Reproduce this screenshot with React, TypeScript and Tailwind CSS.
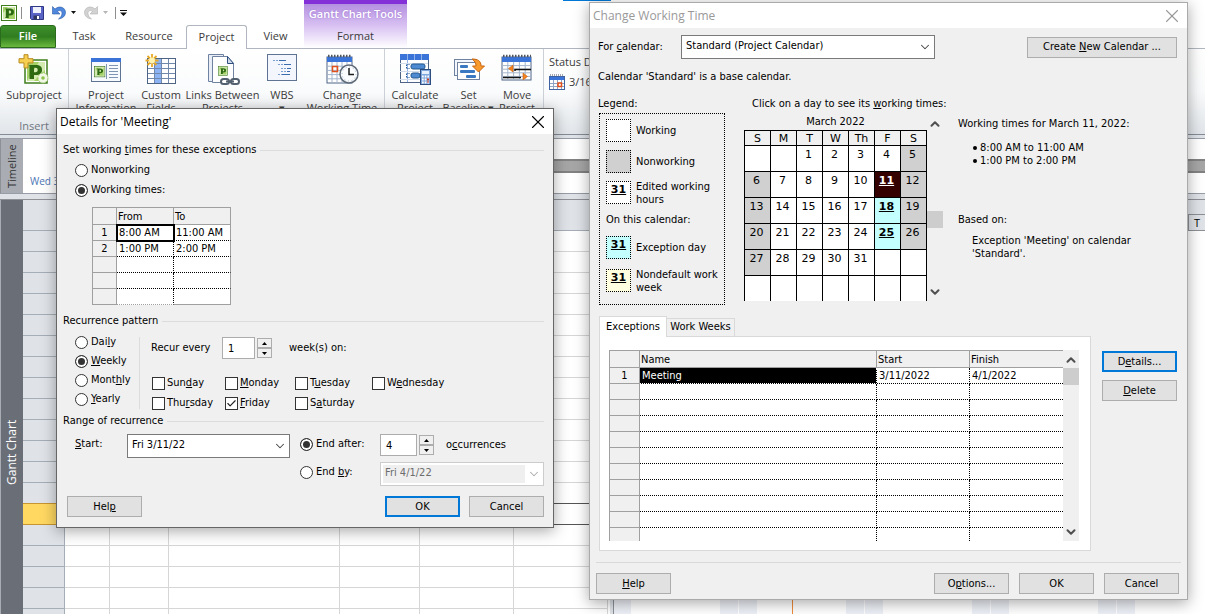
import React from "react";
import { ChevronDown, ChevronUp, Check, X } from "lucide-react";

/* Renders a caption whose access key (the letter after "&") is underlined. */
function Key({ text }: { text: string }) {
  const i = text.indexOf("&");
  if (i < 0) return <>{text}</>;
  return (
    <span className="whitespace-pre">
      {text.slice(0, i)}
      <u className="underline-offset-1">{text[i + 1]}</u>
      {text.slice(i + 2)}
    </span>
  );
}

/* ---------- icons ---------- */

function ProjectLogo({ x = 0, y = 0, s = 1 }: { x?: number; y?: number; s?: number }) {
  return (
    <g transform={`translate(${x} ${y}) scale(${s})`}>
      <rect x="0.5" y="0.5" width="15" height="15" fill="#fff" stroke="#3f7d1c" />
      <path d="M2 2h12v12H2z" fill="#a5d266" />
      <path d="M2 14V8l5-6h7L6 14z" fill="#d3ebb0" />
      <path d="M4 3.5h5.2c2.4 0 3.8 1.3 3.8 3.4 0 2.2-1.6 3.600-4.100 3.600H7.800V13H4l.8-1V4.500zm3.900 2v3h.8c.9 0 1.400-.5 1.400-1.500s-.5-1.500-1.400-1.500z" fill="#2d6a12" />
    </g>
  );
}

function CalendarGrid({ w = 28, h = 26, x = 1, y = 3 }: { w?: number; h?: number; x?: number; y?: number }) {
  const cols = [1, 2, 3, 4].map((n) => x + (w / 5) * n);
  const rows = [1, 2, 3, 4].map((n) => y + 5 + ((h - 5) / 5) * n);
  return (
    <g>
      <rect x={x} y={y} width={w} height={h} fill="#fff" stroke="#4d6485" />
      <rect x={x} y={y} width={w} height="5" fill="#3b74d8" />
      {cols.map((c) => (
        <path key={c} d={`M${c} ${y + 5}V${y + h}`} stroke="#a3b5cd" />
      ))}
      {rows.map((r) => (
        <path key={r} d={`M${x} ${r}H${x + w}`} stroke="#a3b5cd" />
      ))}
      <path d={`M${x + 1} ${y - 1}H${x + w}`} stroke="#4f5660" strokeWidth="2.500" strokeDasharray="1.500 1.500" />
    </g>
  );
}

const big = "h-8 w-8 shrink-0";

const SubprojectIcon = () => (
  <svg viewBox="0 0 32 32" className={big}>
    <rect x="7" y="6" width="22" height="23" fill="#fff" stroke="#3f7d1c" strokeWidth="1.500" />
    <path d="M9 8h18v19H9z" fill="#a5d266" />
    <path d="M9 27l12-19h6v8L16 27z" fill="#d3ebb0" />
    <path d="M11 11h7c4 0 6 1.800 6 5s-2.300 5-6 5h-2v4h-4.500V12zm5 2.800v4.400h1.500c1.500 0 2.200-.8 2.200-2.200s-.7-2.200-2.200-2.200z" fill="#2d6a12" />
    <circle cx="25" cy="24" r="5" fill="#f1f8e6" stroke="#9cc76a" strokeDasharray="2 1.500" />
    <circle cx="25" cy="24" r="1.800" fill="#8cc34a" />
    <path d="M6 .7h4v4h5v4.200h-5v5H6v-5H1V4.700h5z" fill="#f6cf52" stroke="#b98a1e" />
  </svg>
);
const InfoIcon = () => (
  <svg viewBox="0 0 32 32" className={big}>
    <rect x="1.500" y="4.500" width="29" height="23" fill="#f7faff" stroke="#5f7493" />
    <rect x="1" y="4" width="30" height="4" fill="#3b74d8" />
    <path d="M16.500 10v15" stroke="#8095b3" />
    <path d="M19 11.500h9M19 14.500h9M19 17.500h9M19 20.500h9M19 23.500h9" stroke="#8095b3" />
    <ProjectLogo x={4} y={12} s={0.7} />
  </svg>
);
const CustomIcon = () => (
  <svg viewBox="0 0 32 32" className={big}>
    <rect x="2.500" y="4.500" width="28" height="25" fill="#fff" stroke="#4d6485" />
    <rect x="9" y="5" width="7" height="24" fill="#8cb4f5" />
    <path d="M9.500 5v24M16.500 5v24M23.500 5v24M3 9.500h27M3 14.500h27M3 19.500h27M3 24.500h27" stroke="#6f88ab" />
    <path d="M7 0v13M.5 6.500h13M2.500 2l9 9M11.500 2l-9 9" stroke="#e8a923" strokeWidth="1.800" />
    <circle cx="7" cy="6.500" r="3" fill="#fff3b0" />
  </svg>
);
const LinksIcon = () => (
  <svg viewBox="0 0 34 32" className="h-8 w-[34px] shrink-0">
    <path d="M2.500.5h15v27h-15z" fill="#e9eef6" stroke="#6f83a0" />
    <path d="M6.500 2.500h15l6 7v19h-21z" fill="#fff" stroke="#6f83a0" />
    <path d="M21.500 2.500v7h6z" fill="#cfd9e8" stroke="#2f4f80" />
    <ProjectLogo x={12} y={12} s={0.62} />
    <g fill="#fff" stroke="#53606f" strokeWidth="2">
      <rect x="15" y="25" width="8" height="5" rx="2.500" />
      <rect x="25" y="25" width="8" height="5" rx="2.500" />
      <path d="M20 27.500h8" />
    </g>
  </svg>
);
const WbsIcon = () => (
  <svg viewBox="0 0 32 32" className={big}>
    <rect x="1.500" y=".5" width="29" height="26" fill="#f3f7fd" stroke="#5f7493" />
    <path d="M7 6.500h5M12 10.500h5M15 14.500h5M15 17.500h5M12 20.500h4" stroke="#7c9fd0" strokeDasharray="2 1" />
    <path d="M13 6.500h7M18 10.500h7M21 14.500h4M16 20.500h8M21 17.500h3" stroke="#3a6cae" />
  </svg>
);
const ChangeIcon = () => (
  <svg viewBox="0 0 34 32" className="h-8 w-[34px] shrink-0">
    <CalendarGrid x={2} w={25} />
    <rect x="7.500" y="12.500" width="5" height="5" fill="none" stroke="#e0501c" strokeWidth="1.500" />
    <circle cx="24" cy="20" r="9" fill="#fafcff" stroke="#5f6a78" strokeWidth="1.500" />
    <circle cx="24" cy="20" r="7" fill="none" stroke="#a7b2c0" strokeDasharray="1 2.660" />
    <path d="M24 14v6.500h5" fill="none" stroke="#1d1d1d" strokeWidth="1.500" />
  </svg>
);
const CalculateIcon = () => (
  <svg viewBox="0 0 34 32" className="h-8 w-[34px] shrink-0">
    <rect x="2.500" y=".5" width="28" height="28" fill="#fff" stroke="#4d6485" />
    <rect x="2" y="0" width="29" height="6" fill="#3b74d8" />
    <path d="M9.500 0v28M16.500 0v6M23.500 0v6" stroke="#8fb2ea" />
    <path d="M2 9.500h28M2 17.500h28M2 25.500h28" stroke="#d3dcea" />
    <rect x="13" y="10" width="14" height="5" rx="2" fill="#4d8ad2" stroke="#24588f" />
    <rect x="13" y="19" width="9" height="5" rx="2" fill="#4d8ad2" stroke="#24588f" />
    <path d="M8.500 10.500h4M8.500 14.500h4M8.500 19.500h4M8.500 23.500h4M8.500 11v3M8.500 20v3" stroke="#24588f" strokeDasharray="1 1" />
    <rect x="22.500" y="15.500" width="10" height="15" fill="#7fa6dd" stroke="#2d4d80" />
    <rect x="24" y="17" width="7" height="3" fill="#e6f0ff" />
    <path d="M24 22.500h7M24 25.500h7M24 28.500h7" stroke="#fff" strokeWidth="2" strokeDasharray="1.700 1" />
    <path d="M30 24.500v4" stroke="#c8402c" strokeWidth="2" strokeDasharray="2 1" />
  </svg>
);
const BaselineIcon = () => (
  <svg viewBox="0 0 34 32" className="h-8 w-[34px] shrink-0">
    <rect x="2.500" y="5.500" width="22" height="16" fill="#f3f7fd" stroke="#6f83a0" />
    <rect x="5.500" y="8.500" width="22" height="17" fill="#fff" stroke="#6f83a0" />
    <rect x="8" y="11" width="8" height="3" rx="1" fill="#3a78c2" />
    <rect x="8" y="16" width="15" height="3" rx="1" fill="#3a78c2" />
    <rect x="14" y="21" width="10" height="3" rx="1" fill="#3a78c2" />
    <path d="M20 5c6 0 9 2 9 7h3.500L26.500 18 20.500 12H24c0-3-1-4.500-4-7z" fill="#f89a2c" stroke="#c9640d" />
  </svg>
);
const MoveIcon = () => (
  <svg viewBox="0 0 32 32" className={big}>
    <CalendarGrid x={1} w={29} h={23} />
    <path d="M14 17v-1.500h16M2 23.500h18" fill="none" stroke="#111" strokeWidth="1.500" />
    <path d="M12 11v7l-4.500-3.500z" fill="#f58220" stroke="#c9640d" strokeWidth=".6" />
    <path d="M22 19v7l4.500-3.500z" fill="#f58220" stroke="#c9640d" strokeWidth=".6" />
  </svg>
);

/* ---------- ribbon ---------- */

function RibbonButton({ icon, lines, width }: { icon: React.ReactNode; lines: string[]; width: string }) {
  return (
    <button className={`flex flex-col items-center pt-[5px] leading-[13px] ${width}`}>
      {icon}
      <span className="mt-[2px] flex flex-col items-center whitespace-nowrap">
        {lines.map((l) => (
          <span key={l}>{l}</span>
        ))}
      </span>
    </button>
  );
}

function Header() {
  return (
    <header className="flex h-12 shrink-0 text-[#3b3b3b]">
      <div className="flex flex-col">
        <div className="flex h-[25px] items-center gap-1 pl-[1px]">
          <svg viewBox="0 0 16 16" className="h-4 w-4">
            <ProjectLogo />
          </svg>
          <span className="h-3 w-px bg-[#8e8e8e]" />
          <button aria-label="Save" className="ml-[3px]">
            <svg viewBox="0 0 16 16" className="h-4 w-4">
              <path d="M1.500 1.500h13v13h-12l-1-1z" fill="#5a63c6" stroke="#2f3684" />
              <path d="M4 2h8v6H4z" fill="#eef1fb" />
              <path d="M4.500 10.500h6v4h-6z" fill="#30375f" />
              <path d="M8 11h2v3H8z" fill="#fff" />
            </svg>
          </button>
          <button aria-label="Undo" className="ml-[2px] flex items-center gap-1">
            <svg viewBox="0 0 16 16" className="h-4 w-4">
              <path d="M1.500 1.500v7.500H9L6.500 6.500C9 4.500 11 6 11 8.500c0 2-1.500 4-3.500 5.500C11.500 13.500 14.500 11 14.500 7.500c0-5-6-7.500-10.500-3.500z" fill="#4f87dc" stroke="#2d5ca6" strokeWidth=".6" />
            </svg>
            <svg viewBox="0 0 5 3" className="h-[3px] w-[5px]"><path d="M0 0h5L2.500 3z" fill="#111" /></svg>
          </button>
          <button aria-label="Redo" className="ml-[3px] flex items-center gap-1">
            <svg viewBox="0 0 16 16" className="h-4 w-4">
              <path d="M14.500 1.500v7.500H7l2.500-2.500C7 4.500 5 6 5 8.500c0 2 1.500 4 3.500 5.500C4.500 13.500 1.500 11 1.500 7.500c0-5 6-7.500 10.500-3.500z" fill="#d2d2d2" stroke="#b2b2b2" strokeWidth=".6" />
            </svg>
            <svg viewBox="0 0 5 3" className="h-[3px] w-[5px]"><path d="M0 0h5L2.500 3z" fill="#b5b5b5" /></svg>
          </button>
          <span className="ml-[3px] h-3 w-px bg-[#8e8e8e]" />
          <button aria-label="Customize toolbar">
            <svg viewBox="0 0 7 6" className="h-[6px] w-[7px]"><path d="M0 0h7v1H0zM0 2.500h7L3.500 6z" fill="#111" /></svg>
          </button>
        </div>
        <nav className="flex h-[23px] items-stretch">
          <button className="w-14 rounded-t-[3px] border border-[#2b6b1c] bg-linear-to-b from-[#3f8f2c] via-[#2f7d1f] to-[#6ab83e] font-semibold text-white">File</button>
          <button className="w-14">Task</button>
          <button className="w-[74px]">Resource</button>
          <button className="relative z-10 -mb-px w-[61px] rounded-t-[3px] border border-b-0 border-[#b0b6bf] bg-white">Project</button>
          <button className="w-[57px]">View</button>
        </nav>
      </div>
      <div className="flex w-[103px] flex-col items-center border-t-4 border-[#8430d8] bg-linear-to-b from-[#b490e0] via-[#d9c2f2] to-white">
        <span className="flex h-[21px] items-center whitespace-nowrap font-semibold text-white [text-shadow:0_0_2px_#9a6fd0]">Gantt Chart Tools</span>
        <button className="h-[23px]">Format</button>
      </div>
      <div className="ml-[156px] h-px w-12 bg-[#0078d7]" />
    </header>
  );
}

function Ribbon() {
  const group = "flex border-r border-[#ccd1d8]";
  return (
    <div className="flex h-[87px] shrink-0 border-y border-t-[#b0b6bf] border-b-[#838c97] bg-linear-to-b from-white via-[#fafbfc] to-[#e1e5e9] text-[#3b3b3b]">
      <div className="flex w-[69px] flex-col items-center border-r border-[#ccd1d8]">
        <RibbonButton icon={<SubprojectIcon />} lines={["Subproject"]} width="w-full" />
        <span className="mt-auto text-[#6e7680]">Insert</span>
      </div>
      <div className={`${group} w-[316px] pl-[7px]`}>
        <RibbonButton icon={<InfoIcon />} lines={["Project", "Information"]} width="w-[60px]" />
        <RibbonButton icon={<CustomIcon />} lines={["Custom", "Fields"]} width="w-[50px]" />
        <RibbonButton icon={<LinksIcon />} lines={["Links Between", "Projects"]} width="w-[73px]" />
        <RibbonButton icon={<WbsIcon />} lines={["WBS", "▾"]} width="w-[46px]" />
        <RibbonButton icon={<ChangeIcon />} lines={["Change", "Working Time"]} width="w-[74px]" />
      </div>
      <div className={`${group} w-[159px] pl-[5px]`}>
        <RibbonButton icon={<CalculateIcon />} lines={["Calculate", "Project"]} width="w-[50px]" />
        <RibbonButton icon={<BaselineIcon />} lines={["Set", "Baseline ▾"]} width="w-[57px]" />
        <RibbonButton icon={<MoveIcon />} lines={["Move", "Project"]} width="w-[40px]" />
      </div>
      <div className="flex flex-col pt-[3px] pl-[5px] leading-5">
        <span>Status Date:</span>
        <span className="flex items-center gap-1">
          <svg viewBox="0 0 16 16" className="h-4 w-4">
            <rect x=".5" y="2.500" width="15" height="13" fill="#fff" stroke="#3f62a0" />
            <path d="M1 3h14v3H1z" fill="#3b74d8" />
            <path d="M1 9.500h14M1 12.500h14M4.500 6v9M8.500 6v9M12.500 6v9" stroke="#8fa6c4" />
            <path d="M1 1h14" stroke="#4f5660" strokeDasharray="1 1" />
            <rect x="9" y="9" width="3.500" height="3.500" fill="#fff" stroke="#e0501c" strokeWidth="1.500" />
          </svg>
          3/16/22
        </span>
      </div>
    </div>
  );
}

/* ---------- project views ---------- */

const sheetColumns = ["w-[45px]", "w-[59px]", "w-[171px]", "w-[80px]", "w-[94px]", "w-[94px]"];

function Workspace() {
  return (
    <main className="flex min-h-0 flex-1 flex-col bg-[#dfe3e8] pt-[3px]">
      <section className="flex h-[56px] shrink-0 border-y border-[#979da6] bg-white">
        <h2 className="flex w-[23px] rotate-180 items-center justify-center border-r border-[#8d9196] bg-[#a9adb3] text-[#333] [writing-mode:vertical-rl]">Timeline</h2>
        <div className="flex w-[34px] flex-col justify-end pb-1 pl-[7px] text-[10px] whitespace-nowrap text-[#4b74b5]">Wed 3/16</div>
        <div className="mt-5 h-[14px] flex-1 border-y-2 border-[#828282] bg-[#a6a6a6]" />
      </section>
      <section className="mt-[5px] flex min-h-0 flex-1 border-t border-[#8d9196] bg-white">
        <h2 className="flex w-[23px] rotate-180 items-center justify-center border-r border-[#a9adb3] bg-[#6a6e76] pb-[90px] text-[12px] text-white [writing-mode:vertical-rl]">Gantt Chart</h2>
        <div className="w-[587px] shrink-0 overflow-hidden">
          <table className="table-fixed border-separate border-spacing-0">
            <thead>
              <tr>
                <th className="h-[31px] w-[42px] border-r border-b border-[#a5adb6] bg-[#dfe3e8]" />
                {sheetColumns.map((w, i) => (
                  <th key={i} className={`h-[31px] border-r border-b border-[#a5adb6] bg-[#dfe3e8] ${w}`} />
                ))}
              </tr>
            </thead>
            <tbody>
              {Array.from({ length: 19 }, (_, r) => (
                <tr key={r}>
                  <th className={r === 13 ? "h-[21px] border-b border-[#c79531] bg-[#ffd862]" : r === 12 ? "h-[21px] border-r border-b border-[#c79531] bg-[#dfe3e8]" : "h-[21px] border-r border-b border-[#a5adb6] bg-[#dfe3e8]"} />
                  {sheetColumns.map((_, c) => (
                    <td key={c} className={r === 13 || r === 12 ? "h-[21px] border-r border-b border-r-[#d6d6d6] border-b-[#555]" : "h-[21px] border-r border-b border-[#d6d6d6]"} />
                  ))}
                </tr>
              ))}
            </tbody>
          </table>
        </div>
        <div className="w-1 shrink-0 border-r border-[#8d9196] bg-[#dfe3e8]" />
        <div className="flex min-w-0 flex-1 flex-col overflow-hidden">
          <div className="h-[15px] shrink-0 border-b border-[#8d9196] bg-[#dfe3e8]" />
          <div className="flex h-4 shrink-0 justify-end border-b border-[#8d9196] bg-[#dfe3e8]">
            <span className="w-[17px] border-l border-[#8d9196] text-center leading-[15px]">T</span>
          </div>
          <div className="flex flex-1">
            <div className="w-[17px] shrink-0 bg-[#edf0f6]" />
            {[0, 1, 2, 3].map((n) => (
              <div key={n} className="flex w-[126px] shrink-0 justify-end gap-px">
                {n === 1 && <div className="mr-[52px] w-px bg-[#f08b3a]" />}
                <div className="w-[18px] bg-[#edf0f6]" />
                <div className="w-[18px] bg-[#edf0f6]" />
              </div>
            ))}
          </div>
        </div>
      </section>
    </main>
  );
}

/* ---------- dialog controls ---------- */

function Button({ text, primary, wide }: { text: string; primary?: boolean; wide?: boolean }) {
  return (
    <button className={`h-[21px] shrink-0 bg-[#e1e1e1] leading-4 ${wide ? "w-[150px]" : "w-[75px]"} ${primary ? "border-2 border-[#0078d7]" : "border border-[#adadad]"}`}>
      <Key text={text} />
    </button>
  );
}

function Radio({ name, text, checked, cls = "h-5" }: { name: string; text: string; checked?: boolean; cls?: string }) {
  return (
    <label className={`flex items-center gap-[3px] whitespace-nowrap ${cls}`}>
      <input type="radio" name={name} defaultChecked={checked} className="h-[13px] w-[13px] shrink-0 appearance-none rounded-full border border-[#333] bg-white checked:bg-[#333] checked:shadow-[inset_0_0_0_2px_white]" />
      <Key text={text} />
    </label>
  );
}

function CheckBox({ text, checked }: { text: string; checked?: boolean }) {
  return (
    <label className="relative flex h-5 items-center gap-[2px] whitespace-nowrap">
      <input type="checkbox" defaultChecked={checked} className="peer h-[13px] w-[13px] shrink-0 appearance-none border border-[#333] bg-white" />
      <Check className="pointer-events-none absolute left-[1px] hidden h-[11px] w-[11px] text-[#222] peer-checked:block" strokeWidth={2.500} />
      <Key text={text} />
    </label>
  );
}

function Select({ id, value, cls, disabled, label }: { id?: string; value: string; cls: string; disabled?: boolean; label?: string }) {
  return (
    <div className={`relative h-6 shrink-0 ${cls}`}>
      <select id={id} aria-label={label} disabled={disabled} className={`h-6 w-full appearance-none border pb-[2px] pl-1 ${disabled ? "border-[#ccc] bg-[#efefef] text-[#6d6d6d] opacity-100 shadow-[inset_0_0_0_2px_white]" : "border-[#7a7a7a] bg-white"}`}>
        <option>{value}</option>
      </select>
      <span className={`pointer-events-none absolute inset-y-px right-px flex w-[18px] items-center justify-center bg-white ${disabled ? "text-[#aaa]" : "text-[#444]"}`}>
        <ChevronDown className="h-[14px] w-[14px]" strokeWidth={1.800} />
      </span>
    </div>
  );
}

function Spinner({ id, value, cls }: { id: string; value: string; cls: string }) {
  const btn = "flex h-[10px] w-[15px] items-center justify-center border border-[#adadad] bg-[#f0f0f0]";
  return (
    <span className="flex shrink-0 items-center gap-[2px]">
      <input id={id} defaultValue={value} className={`h-[22px] border border-[#acacac] bg-white pl-[5px] ${cls}`} />
      <span className="flex flex-col">
        <button aria-label="Increase" className={btn}><svg viewBox="0 0 5 3" className="h-[3px] w-[5px]"><path d="M0 3h5L2.500 0z" /></svg></button>
        <button aria-label="Decrease" className={btn}><svg viewBox="0 0 5 3" className="h-[3px] w-[5px]"><path d="M0 0h5L2.500 3z" /></svg></button>
      </span>
    </span>
  );
}

function SectionTitle({ text }: { text: string }) {
  return (
    <h3 className="flex h-4 items-center gap-1 whitespace-nowrap">
      <Key text={text} />
      <span className="h-px flex-1 bg-[#dcdcdc]" />
    </h3>
  );
}

function TitleBar({ text, muted }: { text: string; muted?: boolean }) {
  return (
    <div className={`flex h-[25px] items-center justify-between bg-white pr-1 pl-[3px] font-['Open_Sans','Noto_Sans',sans-serif] text-[12px] ${muted ? "text-[#999]" : "text-black"}`}>
      <h2>{text}</h2>
      <button aria-label="Close"><X className="h-[22px] w-[22px]" strokeWidth={1.200} /></button>
    </div>
  );
}

/* ---------- Details dialog ---------- */

const times = [["8:00 AM", "11:00 AM"], ["1:00 PM", "2:00 PM"], ["", ""], ["", ""], ["", ""]];
const head = "h-[17px] border-r border-b border-[#a0a0a0] bg-[#f0f0f0] p-0 pt-[2px] pl-[1px] text-left font-normal leading-[14px]";

function DetailsDialog() {
  return (
    <section role="dialog" aria-label="Details for 'Meeting'" className="absolute top-[108px] left-[56px] z-20 w-[498px] border border-[#666] bg-[#f0f0f0] shadow-[0_3px_14px_rgba(0,0,0,0.35)]">
      <TitleBar text="Details for 'Meeting'" />
      <div className="flex flex-col pt-2 pr-[9px] pb-[10px] pl-[6px]">
        <SectionTitle text="Set working &times for these exceptions" />
        <div className="mt-[2px] pl-3">
          <Radio name="kind" text="Nonworking" />
          <Radio name="kind" text="Working times:" checked />
        </div>
        <table className="mt-[7px] ml-[29px] w-[139px] table-fixed border-separate border-spacing-0 border-t border-l border-[#a0a0a0] bg-white">
          <thead>
            <tr>
              <th className={`w-6 ${head}`} />
              <th className={`w-[57px] ${head}`}>From</th>
              <th className={`w-[57px] ${head}`}>To</th>
            </tr>
          </thead>
          <tbody>
            {times.map((t, i) => (
              <tr key={i}>
                <th className="h-4 border-r border-b border-[#a0a0a0] bg-[#f0f0f0] p-0 pt-px text-center font-normal leading-[14px]">{i < 2 ? i + 1 : ""}</th>
                <td className={`h-4 border-r border-dotted border-black p-0 pt-px pl-[2px] whitespace-nowrap leading-[14px] ${i === 4 ? "border-b border-b-[#a0a0a0]" : "border-b"} ${i === 0 ? "outline-2 -outline-offset-1 outline-black" : ""}`}>{t[0]}</td>
                <td className={`h-4 border-r border-b border-r-[#a0a0a0] p-0 pt-px pl-[2px] whitespace-nowrap leading-[14px] ${i === 4 ? "border-b-[#a0a0a0]" : "border-b-black [border-bottom-style:dotted]"}`}>{t[1]}</td>
              </tr>
            ))}
          </tbody>
        </table>
        <div className="mt-2"><SectionTitle text="Recurrence pattern" /></div>
        <div className="mt-1 flex pl-3">
          <div className="w-[64px] pb-1">
            <Radio name="pattern" text="Dai&ly" cls="h-[19px]" />
            <Radio name="pattern" text="&Weekly" checked cls="h-[19px]" />
            <Radio name="pattern" text="Mont&hly" cls="h-[19px]" />
            <Radio name="pattern" text="&Yearly" cls="h-[19px]" />
          </div>
          <span className="my-1 w-px bg-[#dcdcdc]" />
          <div className="flex flex-col justify-between pt-1 pl-[11px]">
            <div className="flex items-center">
              <label htmlFor="recur" className="w-[71px]">Recur every</label>
              <Spinner id="recur" value="1" cls="w-[33px]" />
              <span className="pl-[17px]">week(s) on:</span>
            </div>
            <div className="grid grid-cols-[73px_70px_77px_80px] pl-px">
              <CheckBox text="Sun&day" />
              <CheckBox text="&Monday" />
              <CheckBox text="T&uesday" />
              <CheckBox text="W&ednesday" />
              <CheckBox text="Thu&rsday" />
              <CheckBox text="&Friday" checked />
              <CheckBox text="S&aturday" />
            </div>
          </div>
        </div>
        <SectionTitle text="Range of recurrence" />
        <div className="mt-[5px] flex items-start pl-3">
          <label htmlFor="start" className="w-[52px] leading-5"><Key text="&Start:" /></label>
          <Select id="start" value="Fri 3/11/22" cls="w-[163px]" />
          <div className="ml-[10px] grid flex-1 grid-cols-[80px_1fr] items-start gap-y-[6px]">
            <Radio name="end" text="End after:" checked />
            <div className="flex items-center">
              <Spinner id="count" value="4" cls="w-[37px]" />
              <label htmlFor="count" className="pl-3"><Key text="o&ccurrences" /></label>
            </div>
            <Radio name="end" text="End &by:" />
            <Select value="Fri 4/1/22" label="End date" cls="w-full" disabled />
          </div>
        </div>
        <div className="mt-[10px] flex gap-[9px] pl-1">
          <Button text="Hel&p" />
          <span className="flex-1" />
          <Button text="OK" primary />
          <Button text="Cancel" />
        </div>
      </div>
    </section>
  );
}

/* ---------- Change Working Time dialog ---------- */

const exceptionFill = "bg-[#c4ffff]";
const nondefaultFill = "bg-[#ffffe0]";

function LegendRow({ lines, fill, day, cls }: { lines: string[]; fill: string; day?: boolean; cls: string }) {
  return (
    <li className={`flex items-center gap-[5px] ${cls}`}>
      <span className={`h-[23px] w-[25px] shrink-0 border border-dotted border-black text-center font-['DejaVu_Sans',sans-serif] font-bold leading-4 underline underline-offset-1 ${fill}`}>{day ? "31" : ""}</span>
      <span className="whitespace-nowrap leading-[13px]">
        {lines.map((l) => <span key={l} className="block">{l}</span>)}
      </span>
    </li>
  );
}

function ScrollBar({ thumb }: { thumb: string }) {
  return (
    <div className="flex w-4 shrink-0 flex-col items-center bg-[#f0f0f0] text-[#505050]">
      <ChevronUp className="mt-[3px] h-[14px] w-[14px] shrink-0" strokeWidth={3.500} />
      <span className={`h-[17px] w-full bg-[#cdcdcd] ${thumb}`} />
      <ChevronDown className="mt-auto mb-[2px] h-[14px] w-[14px] shrink-0" strokeWidth={3.500} />
    </div>
  );
}

function dayClass(day: number, col: number) {
  if (day === 11) return "bg-[#340000] font-bold text-white underline underline-offset-1";
  if (day === 18 || day === 25) return `${exceptionFill} font-bold underline underline-offset-1`;
  if (day >= 1 && day <= 31 && (col === 0 || col === 6)) return "bg-[#d0d0d0]";
  return "bg-white";
}

function MonthTable() {
  return (
    <table className="w-[183px] table-fixed border-separate border-spacing-0 border-t border-l border-black font-['DejaVu_Sans',sans-serif]">
      <thead>
        <tr>
          {["S", "M", "T", "W", "Th", "F", "S"].map((d, i) => (
            <th key={i} className="h-[15px] border-r border-b border-black p-0 pt-px text-center font-normal leading-[13px]">{d}</th>
          ))}
        </tr>
      </thead>
      <tbody>
        {[0, 1, 2, 3, 4, 5].map((w) => (
          <tr key={w}>
            {[0, 1, 2, 3, 4, 5, 6].map((c) => {
              const day = w * 7 + c - 1;
              return (
                <td key={c} className={`border-r border-black p-0 pr-[2px] pb-[7px] text-center leading-[18px] ${w < 5 ? "h-[26px] border-b" : "h-[25px]"} ${dayClass(day, c)}`}>
                  {day >= 1 && day <= 31 ? day : ""}
                </td>
              );
            })}
          </tr>
        ))}
      </tbody>
    </table>
  );
}

function ExceptionsTable() {
  return (
    <table className="flex-1 table-fixed border-separate border-spacing-0 border-t border-l border-[#a0a0a0]">
      <thead>
        <tr>
          <th className={`w-[30px] ${head}`} />
          <th className={head}>Name</th>
          <th className={`w-[93px] ${head}`}>Start</th>
          <th className={`w-[93px] border-r-0 ${head}`}>Finish</th>
        </tr>
      </thead>
      <tbody>
        {Array.from({ length: 11 }, (_, i) => {
          const h = i === 10 ? "h-[13px]" : "h-4 border-b";
          const cell = `${h} border-dotted border-black p-0 pl-[2px] leading-[14px] ${i === 0 ? "pt-px" : ""}`;
          return (
            <tr key={i}>
              <th className={`${h} border-r border-[#a0a0a0] bg-[#f0f0f0] p-0 text-center font-normal leading-[14px] ${i === 0 ? "pt-px" : ""}`}>{i === 0 ? 1 : ""}</th>
              <td className={i === 0 ? "h-4 border-r border-b border-dotted border-white bg-black p-0 pt-px pl-[2px] leading-[14px] text-white" : `${cell} border-r`}>{i === 0 ? "Meeting" : ""}</td>
              <td className={`${cell} border-r`}>{i === 0 ? "3/11/2022" : ""}</td>
              <td className={cell}>{i === 0 ? "4/1/2022" : ""}</td>
            </tr>
          );
        })}
      </tbody>
    </table>
  );
}

function WorkingTimeDialog() {
  const bullet = "flex items-center gap-[3px] before:h-1 before:w-1 before:rounded-full before:bg-black";
  return (
    <section role="dialog" aria-label="Change Working Time" className="absolute top-[2px] left-[589px] z-10 w-[599px] border border-[#aaa] bg-[#f0f0f0] shadow-[0_3px_14px_rgba(0,0,0,0.35)]">
      <TitleBar text="Change Working Time" muted />
      <div className="flex flex-col pt-[7px] pr-[10px] pl-2">
        <div className="flex items-center">
          <label htmlFor="cal" className="w-[83px]"><Key text="For &calendar:" /></label>
          <Select id="cal" value="Standard (Project Calendar)" cls="w-[254px]" />
          <span className="flex-1" />
          <Button text="Create &New Calendar ..." wide />
        </div>
        <p className="mt-[10px] leading-4">Calendar 'Standard' is a base calendar.</p>
        <div className="mt-[11px] flex leading-4">
          <div className="w-[127px]">
            <h3>Legend:</h3>
            <ul className="mt-px ml-px h-[192px] border border-dotted border-black pt-[5px] pl-[6px]">
              <LegendRow lines={["Working"]} fill="bg-white" cls="h-[23px]" />
              <LegendRow lines={["Nonworking"]} fill="bg-[#d0d0d0]" cls="mt-2 h-[23px]" />
              <LegendRow lines={["Edited working", "hours"]} fill="bg-white" day cls="mt-2 h-[23px]" />
              <li className="mt-2">On this calendar:</li>
              <LegendRow lines={["Exception day"]} fill={exceptionFill} day cls="mt-2 h-[23px]" />
              <LegendRow lines={["Nondefault work", "week"]} fill={nondefaultFill} day cls="mt-[10px] h-[23px]" />
            </ul>
          </div>
          <div className="ml-[19px] w-[199px]">
            <p className="pl-2 whitespace-nowrap"><Key text="Click on a day to see its &working times:" /></p>
            <div className="mt-[2px] flex justify-between">
              <div>
                <p className="text-center">March 2022</p>
                <MonthTable />
              </div>
              <ScrollBar thumb="mt-[80px]" />
            </div>
          </div>
          <div className="ml-[15px] pt-5">
            <p>Working times for March 11, 2022:</p>
            <ul className="mt-[9px] pl-[15px] leading-[13px]">
              <li className={bullet}>8:00 AM to 11:00 AM</li>
              <li className={bullet}>1:00 PM to 2:00 PM</li>
            </ul>
            <p className="mt-[45px]">Based on:</p>
            <p className="mt-[6px] pl-[14px] leading-[13px]">Exception 'Meeting' on calendar<br />'Standard'.</p>
          </div>
        </div>
        <div className="mt-[11px] ml-px flex gap-[11px]">
          <div className="flex-1">
            <div role="tablist" className="flex items-end">
              <button role="tab" aria-selected className="relative z-10 -mb-px h-[21px] w-[68px] border border-b-0 border-[#d9d9d9] bg-white">Exceptions</button>
              <button role="tab" className="h-[18px] w-[68px] border border-b-0 border-l-0 border-[#d9d9d9] bg-[#f0f0f0] whitespace-nowrap">Work Weeks</button>
            </div>
            <div className="flex border border-[#d9d9d9] bg-white pt-[13px] pr-[11px] pb-[9px] pl-[9px]">
              <ExceptionsTable />
              <ScrollBar thumb="mt-px" />
            </div>
          </div>
          <div className="flex flex-col gap-2 pt-[35px]">
            <Button text="D&etails..." primary />
            <Button text="&Delete" />
          </div>
        </div>
      </div>
      <hr className="mx-[6px] mt-[11px] border-[#d9d9d9]" />
      <div className="mt-[10px] mb-[5px] flex gap-[10px] pr-2 pl-[6px]">
        <Button text="&Help" />
        <span className="flex-1" />
        <Button text="O&ptions..." />
        <Button text="OK" />
        <Button text="Cancel" />
      </div>
    </section>
  );
}

export default function App() {
  return (
    <div className="relative h-screen overflow-hidden bg-white text-[11px] text-black">
      <div className="flex h-full flex-col font-['Open_Sans','Noto_Sans',sans-serif] text-[11px]">
        <Header />
        <Ribbon />
        <Workspace />
      </div>
      <div className="font-['DejaVu_Sans_Condensed','DejaVu_Sans',sans-serif]">
        <DetailsDialog />
        <WorkingTimeDialog />
      </div>
    </div>
  );
}
